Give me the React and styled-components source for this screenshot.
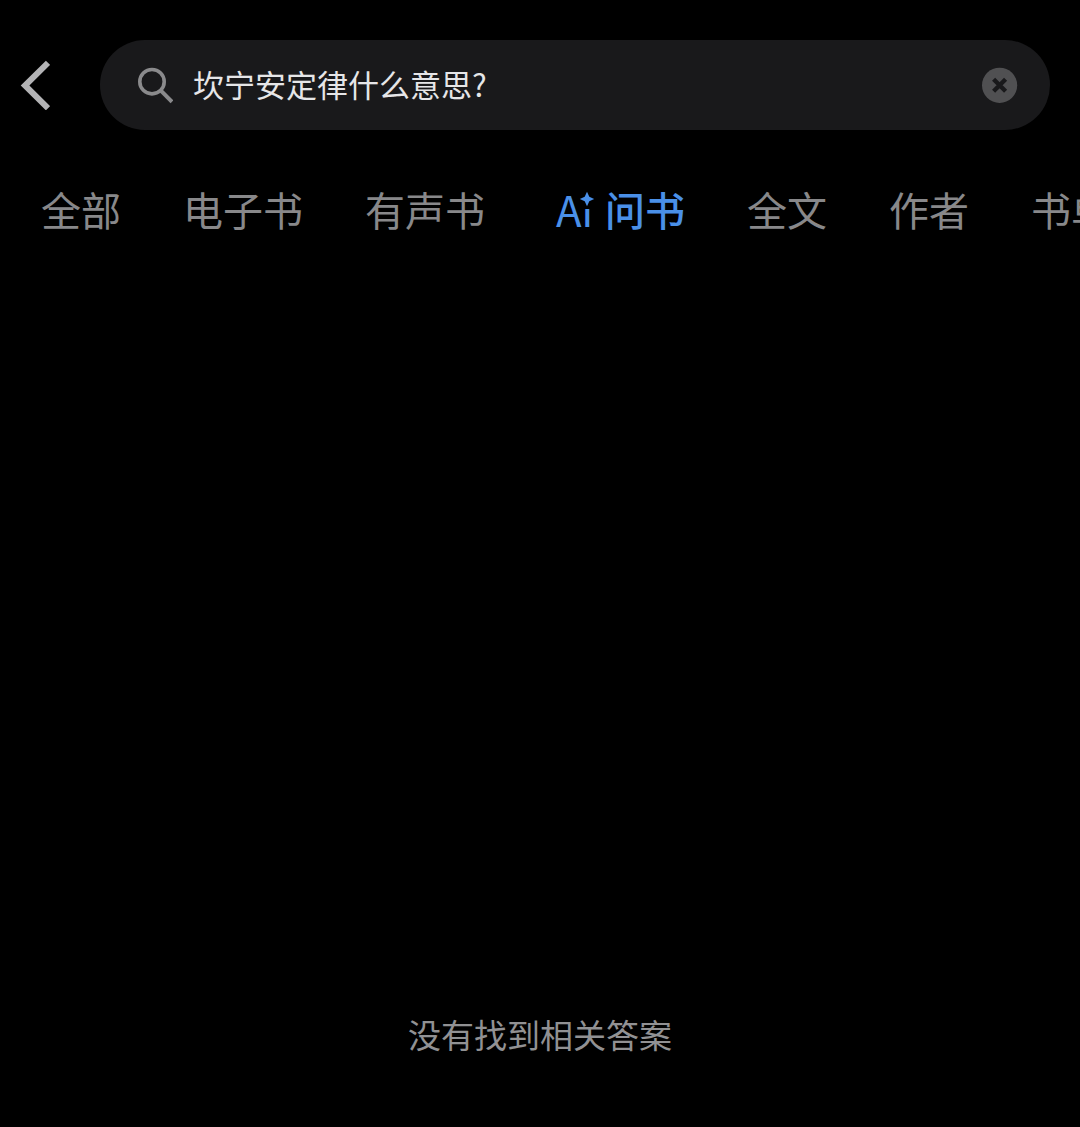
import React, { useState } from 'react';
import styled, { createGlobalStyle } from 'styled-components';

const GlobalStyle = createGlobalStyle`
  * {
    box-sizing: border-box;
  }
  body {
    margin: 0;
    background: #000;
    font-family: 'Noto Sans CJK SC', 'Noto Sans', sans-serif;
  }
  button {
    padding: 0;
    border: none;
    background: none;
    font-family: inherit;
    cursor: pointer;
  }
`;

const TABS = [
  { id: 'all', label: '全部' },
  { id: 'ebook', label: '电子书' },
  { id: 'audio', label: '有声书' },
  { id: 'ask', label: '问书', ai: true },
  { id: 'fulltext', label: '全文' },
  { id: 'author', label: '作者' },
  { id: 'list', label: '书单' },
];

export default function App() {
  const [keyword, setKeyword] = useState('坎宁安定律什么意思?');
  const [activeTab, setActiveTab] = useState('ask');

  return (
    <Page>
      <GlobalStyle />
      <Header>
        <BackButton type="button" aria-label="返回">
          <svg width="30" height="50" viewBox="0 0 30 50">
            <path d="M28 2.8 L5 25.5 L28 48.2" fill="none" stroke="#b3b3b5" strokeWidth="6" />
          </svg>
        </BackButton>
        <SearchBox role="search">
          <SearchIcon />
          <SearchInput
            type="text"
            aria-label="搜索"
            value={keyword}
            onChange={(e) => setKeyword(e.target.value)}
          />
          <ClearButton type="button" aria-label="清除" onClick={() => setKeyword('')}>
            <svg width="36" height="36" viewBox="0 0 36 36">
              <circle cx="17.6" cy="18.3" r="17.6" fill="#505052" />
              <path d="M11.6 12.3 L23.6 24.3 M23.6 12.3 L11.6 24.3" stroke="#19191b" strokeWidth="4.4" />
            </svg>
          </ClearButton>
        </SearchBox>
      </Header>

      <TabBar role="tablist">
        {TABS.map((tab) => (
          <Tab
            key={tab.id}
            type="button"
            role="tab"
            aria-selected={activeTab === tab.id}
            $active={activeTab === tab.id}
            onClick={() => setActiveTab(tab.id)}
          >
            {tab.ai && <AiMark />}
            {tab.label}
          </Tab>
        ))}
      </TabBar>

      <Result>
        <EmptyText>没有找到相关答案</EmptyText>
      </Result>
    </Page>
  );
}

function SearchIcon() {
  return (
    <svg width="36" height="38" viewBox="0 0 36 38" fill="none" stroke="#8a8a8c">
      <circle cx="15" cy="15.7" r="12.2" strokeWidth="3.6" />
      <path d="M23.4 24.2 L35 35.8" strokeWidth="4" />
    </svg>
  );
}

// the star replaces the dot of the i
function AiMark() {
  return (
    <AiText>
      Ai
      <Star width="16" height="18" viewBox="0 0 16 18" aria-hidden="true">
        <rect x="3" width="11" height="18" fill="#000" />
        <path
          d="M8 0.8 L10.3 5.7 L15.2 8 L10.3 10.3 L8 15.2 L5.7 10.3 L0.8 8 L5.7 5.7 Z"
          fill="currentColor"
        />
      </Star>
    </AiText>
  );
}

const Page = styled.div`
  display: flex;
  flex-direction: column;
  min-height: 100vh;
  overflow: hidden;
  background: #000;
`;

const Header = styled.header`
  display: flex;
  align-items: center;
  gap: 50px;
  padding: 40px 30px 0 20px;
`;

const BackButton = styled.button`
  display: flex;
  flex-shrink: 0;
`;

const SearchBox = styled.div`
  display: flex;
  flex: 1;
  align-items: center;
  min-width: 0;
  height: 90px;
  padding: 0 32px 0 37px;
  border-radius: 45px;
  background: #19191b;

  svg {
    flex-shrink: 0;
  }
`;

const SearchInput = styled.input`
  flex: 1;
  min-width: 0;
  margin: 0 20px;
  padding: 0 0 2px;
  border: none;
  outline: none;
  background: none;
  color: #e6e6e8;
  font-family: inherit;
  font-size: 31px;
  line-height: 44px;
`;

const ClearButton = styled.button`
  display: flex;
`;

const TabBar = styled.div`
  display: flex;
  gap: 62px;
  margin-top: 49px;
  padding-left: 41px;
  overflow: hidden;
`;

const Tab = styled.button`
  display: flex;
  flex-shrink: 0;
  color: ${({ $active }) => ($active ? '#4a90e8' : '#88888a')};
  font-size: 40px;
  font-weight: ${({ $active }) => ($active ? 500 : 400)};
  line-height: 60px;
  white-space: nowrap;
`;

const AiText = styled.span`
  position: relative;
  margin: 0 12px 0 9px;
  font-size: 42px;
  font-weight: 400;
`;

const Star = styled.svg`
  position: absolute;
  top: 12px;
  right: -2px;
`;

const Result = styled.main`
  display: flex;
  flex: 1;
  flex-direction: column;
  align-items: center;
  justify-content: flex-end;
  padding-bottom: 69px;
`;

const EmptyText = styled.p`
  margin: 0;
  color: #919193;
  font-size: 33px;
  line-height: 48px;
`;
